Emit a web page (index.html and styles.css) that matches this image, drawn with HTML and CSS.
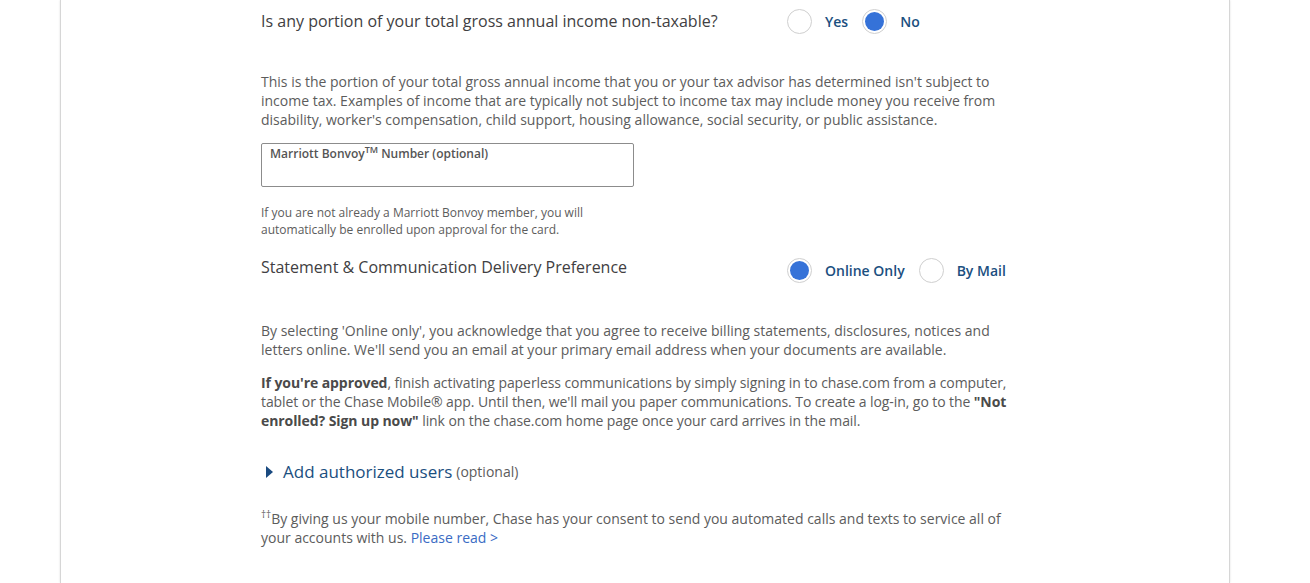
FILE: index.html
```html
<!DOCTYPE html>
<html>
<head>
<meta charset="utf-8">
<link rel="stylesheet" href="styles.css">
</head>
<body>
<div class="page">
  <div class="content">
    <div class="question-row q1">
      <div class="q-label">Is any portion of your total gross annual income non-taxable?</div>
      <div class="radios">
        <label class="radio"><span class="dot"></span><span class="r-text">Yes</span></label>
        <label class="radio checked"><span class="dot"></span><span class="r-text">No</span></label>
      </div>
    </div>
    <p class="para p1">This is the portion of your total gross annual income that you or your tax advisor has determined isn't subject to income tax. Examples of income that are typically not subject to income tax may include money you receive from disability, worker's compensation, child support, housing allowance, social security, or public assistance.</p>
    <div class="field">
      <span class="field-label">Marriott Bonvoy<sup>TM</sup> Number (optional)</span>
    </div>
    <p class="help">If you are not already a Marriott Bonvoy member, you will automatically be enrolled upon approval for the card.</p>
    <div class="question-row q2">
      <div class="q-label">Statement &amp; Communication Delivery Preference</div>
      <div class="radios">
        <label class="radio checked"><span class="dot"></span><span class="r-text">Online Only</span></label>
        <label class="radio"><span class="dot"></span><span class="r-text">By Mail</span></label>
      </div>
    </div>
    <p class="para p2">By selecting 'Online only', you acknowledge that you agree to receive billing statements, disclosures, notices and letters online. We'll send you an email at your primary email address when your documents are available.</p>
    <p class="para p3 condensed"><b>If you're approved</b>, finish activating paperless communications by simply signing in to chase.com from a computer, tablet or the Chase Mobile® app. Until then, we'll mail you paper communications. To create a log-in, go to the <b>"Not enrolled? Sign up now"</b> link on the chase.com home page once your card arrives in the mail.</p>
    <div class="toggle">
      <svg class="caret" width="8" height="12" viewBox="0 0 8 12"><path d="M1 0 L8 6 L1 12 Z" fill="#1a4a80"/></svg>
      <span class="toggle-text">Add authorized users</span> <span class="toggle-opt">(optional)</span>
    </div>
    <p class="para foot"><sup>††</sup>By giving us your mobile number, Chase has your consent to send you automated calls and texts to service all of your accounts with us. <a class="link" href="#">Please read &gt;</a></p>
  </div>
</div>
</body>
</html>
```

FILE: styles.css
```css
html, body {
  margin: 0;
  padding: 0;
  background: #fff;
  font-family: "Open Sans", "Noto Sans", sans-serif;
  color: #555;
}
.page {
  margin-left: 60px;
  width: 1168px;
  height: 583px;
  border-left: 1px solid #d6d6d6;
  border-right: 1px solid #d6d6d6;
  box-shadow: 0 0 2px rgba(0,0,0,0.12);
  overflow: hidden;
}
.content {
  margin-left: 200px;
  width: 760px;
}
.question-row {
  display: flex;
  align-items: center;
}
.q1 { margin-top: 8px; height: 26px; }
.q-label {
  width: 526px;
  font-size: 16px;
  color: #414042;
}
.radios {
  display: flex;
  align-items: center;
}
.radio {
  display: flex;
  align-items: center;
  margin-right: 14px;
}
.dot {
  width: 23px;
  height: 23px;
  border: 1px solid #cfcfcf;
  border-radius: 50%;
  background: #fff;
  box-sizing: content-box;
  position: relative;
}
.checked .dot::after {
  content: "";
  position: absolute;
  left: 2px;
  top: 2px;
  width: 19px;
  height: 19px;
  border-radius: 50%;
  background: #3572d8;
}
.r-text {
  margin-left: 13px;
  font-size: 14px;
  font-weight: 600;
  color: #1b4f80;
}
.para {
  font-size: 14px;
  line-height: 19px;
  margin: 0;
  color: #5c5c5c;
}
.p1 { margin-top: 38px; }
.field {
  margin-top: 14px;
  width: 355px;
  height: 42px;
  border: 1px solid #8c8c8c;
  border-radius: 2px;
  padding: 0 8px;
  box-sizing: content-box;
  line-height: 16px;
}
.field-label {
  font-size: 12px;
  font-weight: 600;
  color: #555;
}
.field-label sup {
  font-size: 9px;
  line-height: 0;
}
.help {
  margin: 17px 0 0;
  width: 380px;
  font-size: 12px;
  line-height: 17px;
  color: #5c5c5c;
}
.q2 { margin-top: 18px; height: 30px; align-items: flex-start; }
.q2 .q-label { padding-top: 0; }
.q2 .radios { margin-top: 2px; }
.p2 { margin-top: 35px; }
.p3 { margin-top: 14px; width: 756px; }
.condensed { letter-spacing: -0.08px; }
.p3 b { color: #4a4a4a; font-weight: 700; }
.toggle {
  margin-top: 30px;
  padding-left: 4px;
  display: flex;
  align-items: center;
}
.caret { margin-right: 10px; }
.toggle-text {
  font-size: 17px;
  color: #1b4f80;
  margin-right: 4px;
}
.toggle-opt {
  font-size: 14px;
  color: #5c5c5c;
}
.foot { margin-top: 26px; }
.foot sup {
  font-size: 10px;
  line-height: 0;
}
.link {
  color: #3a6bc4;
  text-decoration: none;
}
```
